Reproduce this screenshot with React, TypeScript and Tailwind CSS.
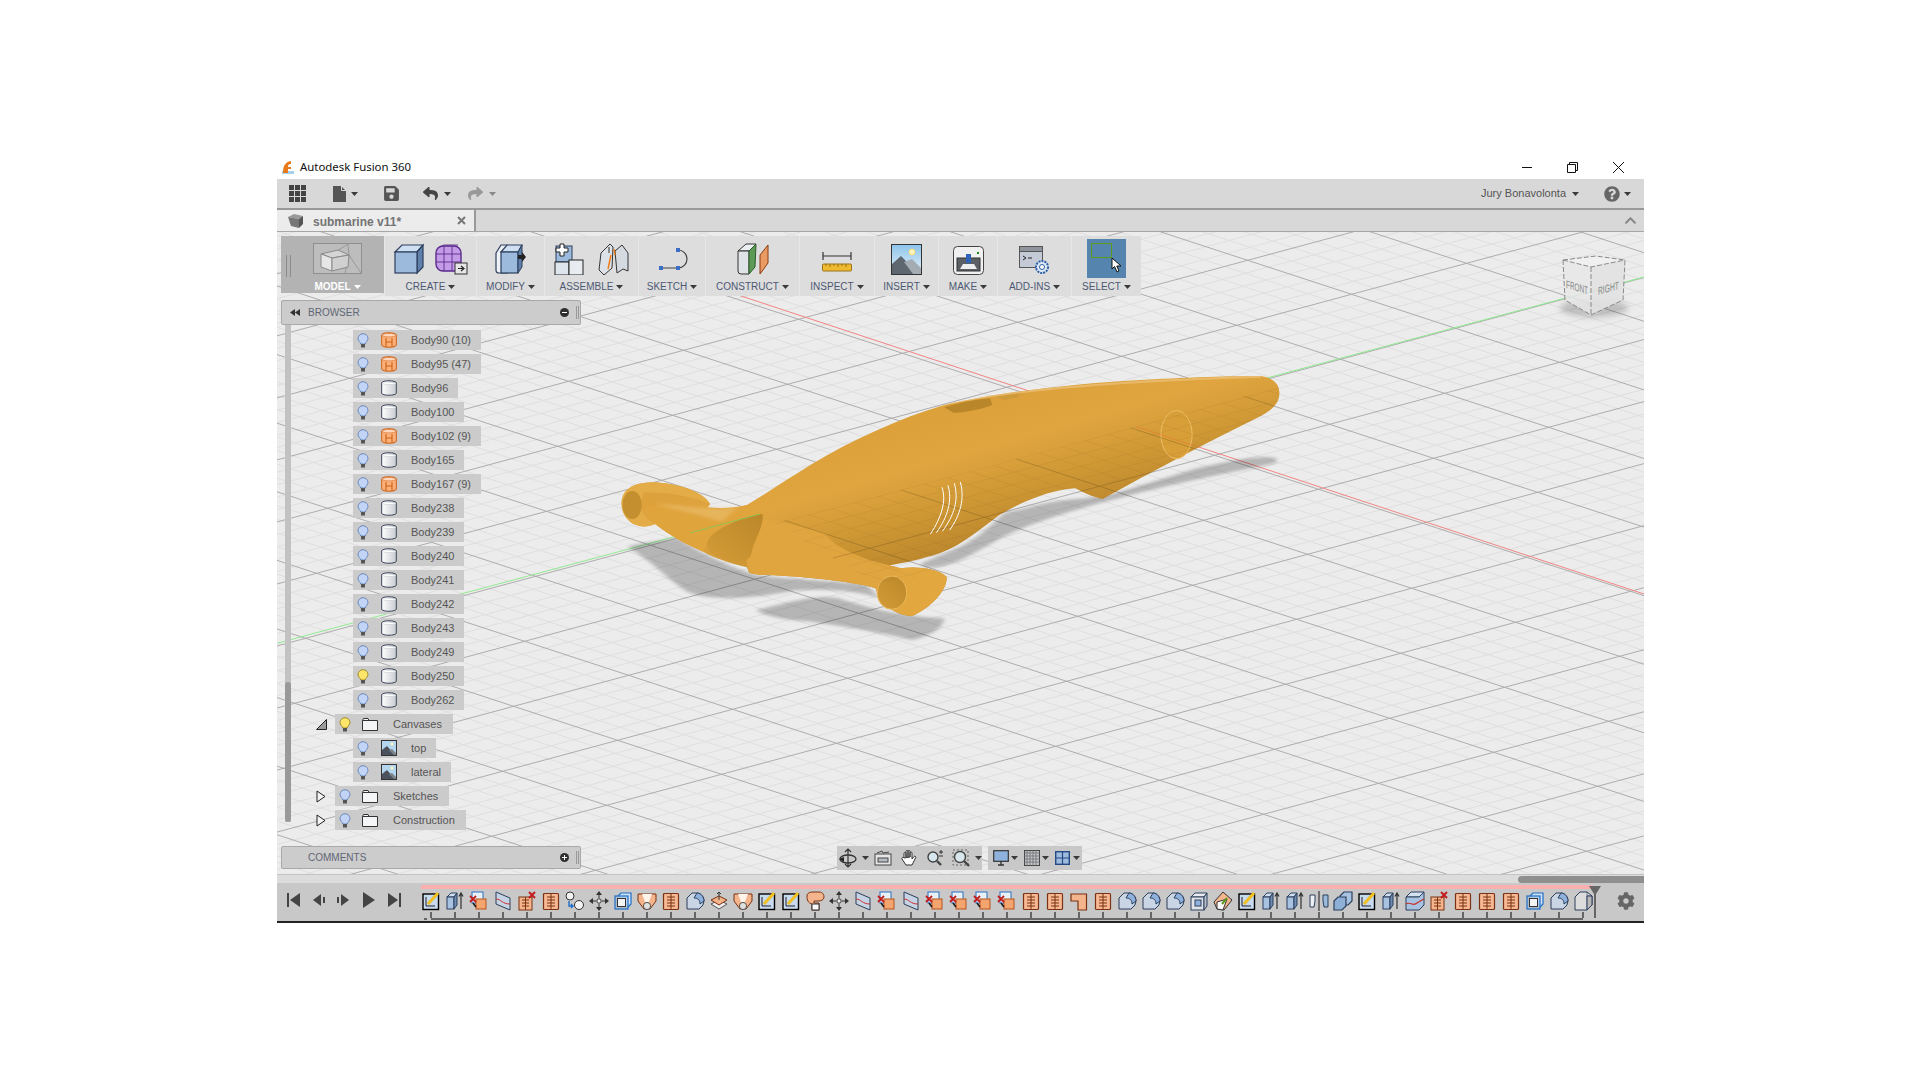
import type { ReactNode } from "react";
import { FaChevronUp, FaCog, FaQuestionCircle, FaReply, FaSave, FaShare } from "react-icons/fa";

/* VIEWPORT GRID: ground plane is almost affine, so a plain lattice is enough */
const O = [1110.6, 421.3];
const G = [-115, 31];
const R = [104, 34];

function lattice(major: boolean) {
  let d = "";
  for (let n = -80; n <= 80; n++) {
    if ((n % 5 === 0) !== major) continue;
    const i = n / 5;
    const ax = O[0] + i * G[0] - 18 * R[0];
    const ay = O[1] + i * G[1] - 18 * R[1];
    const bx = O[0] + i * G[0] + 18 * R[0];
    const by = O[1] + i * G[1] + 18 * R[1];
    d += `M${ax} ${ay}L${bx} ${by}`;
    const cx = O[0] + i * R[0] - 18 * G[0];
    const cy = O[1] + i * R[1] - 18 * G[1];
    const ex = O[0] + i * R[0] + 18 * G[0];
    const ey = O[1] + i * R[1] + 18 * G[1];
    d += `M${cx} ${cy}L${ex} ${ey}`;
  }
  return d;
}

const MAJOR = lattice(true);
const MINOR = lattice(false);

const BODY =
  "M47 460C48 420 70 398 115 397C170 400 225 425 240 462L235 472C265 476 295 474 320 465C400 400 480 315 600 243C650 212 700 185 750 165C860 130 1000 105 1150 92C1250 84 1360 78 1440 78C1470 85 1482 105 1480 135C1478 165 1460 185 1430 205C1320 280 1210 360 1095 447C1070 440 1050 425 1035 415C980 420 920 455 870 495C830 535 790 585 740 610C700 628 660 640 630 646L655 655C690 648 735 655 755 680C758 715 725 770 680 798C655 800 625 775 610 745L600 715C570 700 470 682 380 676C360 675 340 675 325 668L320 652C285 640 250 625 225 605C190 585 150 555 120 522C105 532 85 532 70 520C55 505 47 485 47 460Z";

function Submarine() {
  return (
    <g transform="translate(600 350) scale(0.459 0.3333)">
      <g fill="#000" fillOpacity="0.23" filter="url(#soft)">
        <path d="M1475 325C1440 315 1380 330 1300 355L1110 435C1080 445 1000 445 940 470L880 490C850 530 820 570 770 600L700 640C700 665 760 650 800 620L860 575C900 540 1000 490 1130 445C1250 400 1400 360 1470 340Z" />
        <path d="M60 590C90 578 150 570 170 565C220 610 280 650 340 675C420 690 500 690 580 705L610 745C560 720 480 715 420 722C340 745 240 755 190 725C150 690 110 630 60 590Z" />
        <path d="M340 780C380 770 460 730 520 745C600 780 660 800 750 805C750 830 720 860 680 870C620 850 540 830 460 815C410 810 360 800 340 780Z" />
      </g>
      <path d={BODY} fill="url(#hull)" />
      {/* lit wing and nacelles */}
      <path d="M320 500C380 510 440 530 490 550C505 585 560 625 630 646L655 655L600 715C570 700 470 682 380 676C360 675 340 675 325 668L320 640C320 600 320 540 320 500Z" fill="#e1a53f" />
      <path d="M120 522C110 500 100 490 95 480C110 460 140 462 170 470C220 482 280 480 320 465L355 495L240 560L225 605C190 585 150 555 120 522Z" fill="#e0a43d" />
      <path d="M120 462C170 462 230 482 300 472L265 515C220 495 170 480 120 462Z" fill="#eec477" fillOpacity="0.5" filter="url(#soft2)" />
      <path d="M355 493C340 490 270 520 240 560C225 590 235 610 270 630C300 640 325 640 330 610C335 570 355 540 355 493Z" fill="url(#intake)" />
      <path d="M47 460C48 420 70 398 115 397C170 400 225 425 240 462C200 440 150 425 95 428C85 470 90 500 120 522C105 532 85 532 70 520C55 505 47 485 47 460Z" fill="#e4ac46" />
      <ellipse cx="70" cy="465" rx="21" ry="42" fill="#c48f2f" />
      <path d="M600 715L655 655C690 648 735 655 755 680C758 715 725 770 680 798C655 800 625 775 610 745Z" fill="#e2a83f" />
      <ellipse cx="636" cy="728" rx="32" ry="50" fill="url(#intake)" stroke="#eab75a" vectorEffect="non-scaling-stroke" />
      <ellipse cx="1256" cy="254" rx="34" ry="72" fill="#d89e37" stroke="#edbe66" vectorEffect="non-scaling-stroke" />
      <path d="M750 172C780 160 810 150 850 145L855 165C830 178 790 190 770 188Z" fill="#b98629" />
      <path d="M862 140L915 128L912 142L880 150Z" fill="#cf9a3a" />
      <g clipPath="url(#hullLocal)">
        <path d="M300 470C440 340 560 230 760 160C900 120 1150 92 1440 80" fill="none" stroke="#f0c888" strokeWidth="2" strokeOpacity="0.6" vectorEffect="non-scaling-stroke" />
        <g clipPath="url(#shadeZone)" opacity="0.16">
          <g transform="scale(2.1786 3) translate(-600 -350)">
            <path d={MAJOR} stroke="#000" strokeWidth="1" fill="none" vectorEffect="non-scaling-stroke" />
            <path d={MINOR} stroke="#000" strokeWidth="1" strokeOpacity="0.25" fill="none" vectorEffect="non-scaling-stroke" />
            <line x1="1136" y1="426.5" x2="1240" y2="461" stroke="#ff2020" strokeWidth="1" vectorEffect="non-scaling-stroke" />
          </g>
        </g>
      </g>
      <g fill="none" stroke="#fff" strokeWidth="1" vectorEffect="non-scaling-stroke">
        <path d="M745 412C755 450 745 500 720 552" vectorEffect="non-scaling-stroke" />
        <path d="M758 406C768 450 758 500 733 548" vectorEffect="non-scaling-stroke" />
        <path d="M772 400C782 450 772 495 746 544" vectorEffect="non-scaling-stroke" />
        <path d="M785 396C795 445 785 495 762 540" vectorEffect="non-scaling-stroke" />
      </g>
    </g>
  );
}

function NavCube() {
  return (
    <g>
      <ellipse cx="1594" cy="308" rx="34" ry="9" fill="#000" fillOpacity="0.2" filter="url(#soft3)" />
      <polygon points="1563,260 1591,267 1625,260 1596,256" fill="#f2f2f2" fillOpacity="0.7" />
      <polygon points="1563,260 1591,267 1591,315 1565,300" fill="#e8e8e8" fillOpacity="0.85" />
      <polygon points="1591,267 1625,260 1623,300 1591,315" fill="#e2e2e2" fillOpacity="0.9" />
      <path d="M1563 260L1591 267L1625 260M1563 260L1565 300L1591 315L1623 300L1625 260M1591 267V315M1563 260L1596 256L1625 260" fill="none" stroke="#8a8a8a" strokeDasharray="5 2" />
      <text x="0" y="0" transform="translate(1566 288) skewY(16)" fontFamily="Liberation Sans" fontSize="11" textLength="22" lengthAdjust="spacingAndGlyphs" fill="#858585">FRONT</text>
      <text x="0" y="0" transform="translate(1598 295) skewY(-16)" fontFamily="Liberation Sans" fontSize="11" textLength="21" lengthAdjust="spacingAndGlyphs" fill="#858585">RIGHT</text>
    </g>
  );
}

function Viewport() {
  return (
    <svg className="absolute inset-0 h-full w-full" viewBox="277 232 1367 642">
      <defs>
        <filter id="soft" x="-20%" y="-20%" width="140%" height="140%">
          <feGaussianBlur stdDeviation="5" />
        </filter>
        <filter id="soft2" x="-20%" y="-20%" width="140%" height="140%">
          <feGaussianBlur stdDeviation="5" />
        </filter>
        <filter id="soft3" x="-20%" y="-50%" width="140%" height="200%">
          <feGaussianBlur stdDeviation="3" />
        </filter>
        <linearGradient id="hull" gradientUnits="userSpaceOnUse" x1="800" y1="130" x2="1000" y2="640">
          <stop offset="0" stopColor="#dba03a" />
          <stop offset="0.3" stopColor="#e0a53f" />
          <stop offset="0.55" stopColor="#cf9835" />
          <stop offset="0.85" stopColor="#b7832a" />
          <stop offset="1" stopColor="#b07e28" />
        </linearGradient>
        <linearGradient id="intake" gradientUnits="objectBoundingBox" x1="0" y1="1" x2="1" y2="0">
          <stop offset="0" stopColor="#d49c38" />
          <stop offset="1" stopColor="#bb8729" />
        </linearGradient>
        <clipPath id="hullLocal">
          <path d={BODY} />
        </clipPath>
        <clipPath id="shadeZone">
          <path d="M380 520L900 330L1480 110V500L600 700Z" />
        </clipPath>
      </defs>
      <rect x="277" y="232" width="1367" height="642" fill="#ececec" />
      <path d={MINOR} stroke="#dfdfdf" strokeWidth="1" fill="none" />
      <path d={MAJOR} stroke="#adadad" strokeWidth="1" fill="none" />
      <line x1="735" y1="294" x2="1644" y2="594" stroke="#f28484" />
      <line x1="278" y1="643" x2="1644" y2="277" stroke="#90ea90" />
      <Submarine />
      <line x1="690" y1="533" x2="760" y2="514" stroke="#7fc85a" strokeOpacity="0.8" />
      <NavCube />
    </svg>
  );
}

function Caret({ color = "#3a3a3a" }: { color?: string }) {
  return (
    <svg width="7" height="4" viewBox="0 0 7 4" className="shrink-0">
      <polygon points="0,0 7,0 3.5,4" fill={color} />
    </svg>
  );
}

/* TOOLBAR ICONS */
const BoxIcon = () => (
  <svg width="32" height="32" viewBox="0 0 32 32">
    <polygon points="2,9 9,2 30,2 24,9" fill="#cfe0f2" stroke="#2c3e5c" strokeWidth="1.2" />
    <polygon points="24,9 30,2 30,24 24,30" fill="#5f80ab" stroke="#2c3e5c" strokeWidth="1.2" />
    <rect x="2" y="9" width="22" height="21" fill="#9bbadc" stroke="#2c3e5c" strokeWidth="1.2" />
  </svg>
);
const FormIcon = () => (
  <svg width="34" height="32" viewBox="0 0 34 32">
    <rect x="2" y="3" width="25" height="25" rx="7" fill="#c39be6" stroke="#5a2a8c" strokeWidth="1.4" />
    <path d="M2 11H27M2 19H27M10 3V28M18 3V28M6 4L10 2H24" stroke="#5a2a8c" strokeWidth="0.9" fill="none" />
    <rect x="21" y="20" width="12" height="11" fill="#e6e6e6" stroke="#333" />
    <path d="M24 25.5H29M27 23L30 25.5L27 28" stroke="#222" strokeWidth="1.2" fill="none" />
  </svg>
);
const ModifyIcon = () => (
  <svg width="32" height="32" viewBox="0 0 32 32">
    <path d="M1 10L6 2H12V30H4Q1 30 1 27Z" fill="#eef1f5" stroke="#2c3e5c" strokeWidth="1.2" />
    <polygon points="6,9 12,2 27,2 23,9" fill="#cfe0f2" stroke="#2c3e5c" strokeWidth="1.2" />
    <rect x="6" y="9" width="17" height="21" fill="#9bbadc" stroke="#2c3e5c" strokeWidth="1.2" />
    <polygon points="23,9 27,2 27,24 23,30" fill="#5f80ab" stroke="#2c3e5c" />
    <path d="M23 12H27V9L31 14L27 19V16H23Z" fill="#222" />
  </svg>
);
const AssembleIcon = () => (
  <svg width="32" height="32" viewBox="0 0 32 32">
    <rect x="2" y="3" width="16" height="16" fill="#9bbadc" stroke="#2c3e5c" />
    <rect x="1" y="19" width="14" height="13" fill="#dfe5ec" stroke="#222" />
    <rect x="15" y="17" width="14" height="15" fill="#e8ecf1" stroke="#222" />
    <path d="M6 1H10V5H14V9H10V13H6V9H2V5H6Z" fill="#fff" stroke="#222" />
  </svg>
);
const JointIcon = () => (
  <svg width="32" height="32" viewBox="0 0 32 32">
    <path d="M1 27L3 10L12 1L15 4L14 25L6 32Z" fill="#dde2e8" stroke="#333" />
    <path d="M17 8L24 2L30 10L30 28L25 26L19 30Z" fill="#d4dae1" stroke="#333" />
    <path d="M11 4L11 10" stroke="#333" />
    <path d="M10 26L13 12" stroke="#f07a10" strokeWidth="1.4" />
    <path d="M17 12L16 6" stroke="#f07a10" strokeWidth="1.4" />
  </svg>
);
const SketchIcon = () => (
  <svg width="32" height="24" viewBox="0 0 32 24">
    <path d="M3 20H19A9 9 0 0 0 19 2" fill="none" stroke="#444" strokeWidth="1.2" />
    <rect x="0" y="18" width="4" height="4" fill="#3a6fc4" />
    <rect x="17" y="18" width="4" height="4" fill="#3a6fc4" />
    <rect x="17" y="0" width="4" height="4" fill="#3a6fc4" />
  </svg>
);
const ConstructIcon = () => (
  <svg width="32" height="32" viewBox="0 0 32 32">
    <polygon points="1,8 9,1 19,1 12,8" fill="#eceff2" stroke="#333" />
    <path d="M1 8H12V31H4Q1 31 1 28Z" fill="#dfe2e6" stroke="#333" />
    <polygon points="12,8 19,1 18,24 12,31" fill="#5c9a55" stroke="#2c5a2c" />
    <polygon points="23,12 31,2 31,20 23,31" fill="#ea9b63" stroke="#8a3a12" />
  </svg>
);
const InspectIcon = () => (
  <svg width="30" height="24" viewBox="0 0 30 24">
    <path d="M1 6H29M1 2V10M29 2V10" stroke="#333" strokeWidth="1.2" fill="none" />
    <rect x="0.5" y="14" width="29" height="7" rx="1" fill="#efb931" stroke="#9a7418" />
    <path d="M4 14V16M8 14V17M12 14V16M16 14V17M20 14V16M24 14V17" stroke="#9a7418" />
  </svg>
);
const InsertIcon = () => (
  <svg width="31" height="31" viewBox="0 0 31 31">
    <defs>
      <linearGradient id="sky" x1="0" y1="0" x2="0" y2="1">
        <stop offset="0" stopColor="#8cc4ec" />
        <stop offset="1" stopColor="#e8f2f8" />
      </linearGradient>
    </defs>
    <rect x="0.5" y="0.5" width="30" height="30" fill="url(#sky)" stroke="#333" />
    <circle cx="21" cy="8" r="3" fill="#fff4c0" stroke="#f1d97a" />
    <polygon points="1,30 1,20 10,12 19,21 30,30" fill="#5e6670" />
    <polygon points="13,18 21,15 30,24 30,30 22,30" fill="#a3abb3" />
  </svg>
);
const MakeIcon = () => (
  <svg width="31" height="29" viewBox="0 0 31 29">
    <rect x="0.5" y="0.5" width="30" height="28" rx="4" fill="#f0f0f0" stroke="#444" />
    <rect x="4" y="12" width="23" height="13" fill="#5b5f66" stroke="#333" />
    <rect x="13" y="8" width="5" height="9" fill="#2e63b8" />
    <polygon points="7,23 10,18 21,18 24,23" fill="#eee" />
    <rect x="24" y="6" width="2" height="2" fill="#1a8a1a" />
  </svg>
);
const AddInsIcon = () => (
  <svg width="31" height="29" viewBox="0 0 31 29">
    <rect x="0.5" y="0.5" width="23" height="21" fill="#c4cad6" stroke="#555" />
    <rect x="0.5" y="0.5" width="23" height="5" fill="#8f949c" stroke="#555" />
    <path d="M4 10L7 12L4 14M9 12H13" stroke="#222" fill="none" />
    <circle cx="23" cy="21" r="6" fill="#dfe9f6" stroke="#2b5fa8" strokeWidth="2" strokeDasharray="2 1" />
    <circle cx="23" cy="21" r="2.5" fill="#fff" stroke="#2b5fa8" />
  </svg>
);
const SelectIcon = () => (
  <div className="relative flex h-[39px] w-[39px] items-start justify-start bg-[#5585ae] pl-[4px] pt-[4px]">
    <div className="h-[15px] w-[21px] border border-[#5c9a1a]" />
    {/* cursor sits on top of the marquee */}
    <svg className="absolute left-[24px] top-[18px]" width="11" height="16" viewBox="0 0 11 16">
      <path d="M1 1V12L3.5 9.5L6 15L8 14L5.8 9H10Z" fill="#fff" stroke="#111" />
    </svg>
  </div>
);
const ModelCube = () => (
  <svg width="50" height="32" viewBox="0 0 50 32">
    <rect x="0.5" y="0.5" width="48" height="30" fill="#bdbdbd" stroke="#8f8f8f" />
    <path d="M35 1L36 12L48 30M35 1L24 8M36 12L32 30" stroke="#999" fill="none" />
    <polygon points="8,11 25,7 36,12 19,15" fill="#d5d5d5" stroke="#8a8a8a" />
    <polygon points="8,11 19,15 19,28 8,24" fill="#e6e6e6" stroke="#8a8a8a" />
    <polygon points="19,15 36,12 35,24 19,28" fill="#d0d0d0" stroke="#8a8a8a" />
  </svg>
);

function Section({ width, label, active, children }: { width: string; label: string; active?: boolean; children: ReactNode }) {
  return (
    <div className={`flex flex-col items-center ${width} ${active ? "bg-[#b3b3b3]" : "border-l border-[#e6e6e6] bg-[#dddddd]"}`}>
      <div className="flex h-[42px] items-end justify-center gap-[9px]">{children}</div>
      <div className={`mt-[3px] flex items-center gap-[3px] text-[10px] leading-[12px] ${active ? "ml-[10px] font-bold text-white" : "text-[#4d5873]"}`}>
        {label}
        <Caret color={active ? "#ffffff" : "#3a3a3a"} />
      </div>
    </div>
  );
}

function Toolbar() {
  return (
    <div className="ml-[4px] mt-[4px] flex h-[60px] w-fit">
      <div className="relative">
        <Section width="w-[103px]" label="MODEL" active>
          <div className="mb-[3px] ml-[10px]">
            <ModelCube />
          </div>
        </Section>
        {/* grip over the model tab */}
        <div className="absolute left-[5px] top-[19px] h-[22px] w-[5px] border-x border-[#8c8c8c]" />
      </div>
      <Section width="w-[92px]" label="CREATE">
        <div className="mb-[3px] flex gap-[9px]">
          <BoxIcon />
          <FormIcon />
        </div>
      </Section>
      <Section width="w-[68px]" label="MODIFY">
        <div className="mb-[3px]">
          <ModifyIcon />
        </div>
      </Section>
      <Section width="w-[94px]" label="ASSEMBLE">
        <div className="mb-[3px] flex gap-[12px]">
          <AssembleIcon />
          <JointIcon />
        </div>
      </Section>
      <Section width="w-[67px]" label="SKETCH">
        <div className="mb-[6px] ml-[6px]">
          <SketchIcon />
        </div>
      </Section>
      <Section width="w-[94px]" label="CONSTRUCT">
        <div className="mb-[3px]">
          <ConstructIcon />
        </div>
      </Section>
      <Section width="w-[75px]" label="INSPECT">
        <div className="mb-[4px]">
          <InspectIcon />
        </div>
      </Section>
      <Section width="w-[64px]" label="INSERT">
        <div className="mb-[3px]">
          <InsertIcon />
        </div>
      </Section>
      <Section width="w-[59px]" label="MAKE">
        <div className="mb-[3px]">
          <MakeIcon />
        </div>
      </Section>
      <Section width="w-[74px]" label="ADD-INS">
        <div className="mb-[3px]">
          <AddInsIcon />
        </div>
      </Section>
      <Section width="w-[70px]" label="SELECT">
        <SelectIcon />
      </Section>
    </div>
  );
}

/* BROWSER TREE */
const Bulb = ({ on }: { on?: boolean }) => (
  <svg width="12" height="15" viewBox="0 0 12 15" className="shrink-0">
    <path d="M6 0.7A5 5 0 0 1 11 5.5C11 8 8.6 8.8 8.2 11H3.8C3.4 8.8 1 8 1 5.5A5 5 0 0 1 6 0.7Z" fill={on ? "#ffe66b" : "#c2d4f6"} stroke={on ? "#a08c22" : "#6b88bd"} />
    <rect x="4" y="11" width="4" height="3.5" fill="#555" />
  </svg>
);
const BodyGlyph = () => (
  <svg width="16" height="16" viewBox="0 0 16 16" className="shrink-0">
    <defs>
      <linearGradient id="cyl" x1="0" y1="0" x2="1" y2="0">
        <stop offset="0" stopColor="#fff" />
        <stop offset="1" stopColor="#c8ccd2" />
      </linearGradient>
    </defs>
    <path d="M0.7 3C0.7 0 15.3 0 15.3 3V13C15.3 16 0.7 16 0.7 13Z" fill="url(#cyl)" stroke="#3c4658" />
    <path d="M1 3C1 5 15 5 15 3" fill="#fff" stroke="#c4c8d0" strokeWidth="0.6" />
  </svg>
);
const ComponentGlyph = () => (
  <svg width="16" height="16" viewBox="0 0 16 16" className="shrink-0">
    <path d="M0.7 3C0.7 0 15.3 0 15.3 3V13C15.3 16 0.7 16 0.7 13Z" fill="#fbb07a" stroke="#cf5f12" />
    <path d="M5 6V15M11 6V15M5 10H11" stroke="#cf5f12" strokeWidth="1.1" fill="none" />
    <path d="M1 3C1 5.5 15 5.5 15 3C15 1 1 1 1 3Z" fill="#fdd9bf" stroke="#cf5f12" strokeWidth="0.5" />
  </svg>
);
const CanvasGlyph = () => (
  <svg width="16" height="16" viewBox="0 0 16 16" className="shrink-0">
    <rect x="0.5" y="0.5" width="15" height="15" fill="#b4d6ee" stroke="#333" />
    <polygon points="1,15 1,10 6,6 14,15" fill="#4b525c" />
    <polygon points="8,10 11,9 15,13 15,15 13,15" fill="#7b838c" />
    <circle cx="11" cy="4" r="1.5" fill="#fff6c0" />
  </svg>
);
const FolderGlyph = () => (
  <svg width="16" height="13" viewBox="0 0 16 13" className="shrink-0">
    <path d="M0.5 2.5L1.5 0.5H6L7 2.5H15.5V12.5H0.5Z" fill="#f4f5f7" stroke="#333" />
    <path d="M0.5 2.5H7" stroke="#333" />
  </svg>
);

const BODIES: [string, boolean, boolean][] = [
  ["Body90 (10)", true, false],
  ["Body95 (47)", true, false],
  ["Body96", false, false],
  ["Body100", false, false],
  ["Body102 (9)", true, false],
  ["Body165", false, false],
  ["Body167 (9)", true, false],
  ["Body238", false, false],
  ["Body239", false, false],
  ["Body240", false, false],
  ["Body241", false, false],
  ["Body242", false, false],
  ["Body243", false, false],
  ["Body249", false, false],
  ["Body250", false, true],
  ["Body262", false, false],
];

function Row({ on, icon, label }: { on?: boolean; icon: ReactNode; label: string }) {
  return (
    <div className="flex h-5 w-fit items-center bg-[#cbcbcb] pr-[10px] text-[11px] text-[#555555]">
      <div className="flex w-[20px] justify-center">
        <Bulb on={on} />
      </div>
      <div className="ml-[8px] flex w-[16px] justify-center">{icon}</div>
      <span className="ml-[14px] leading-none">{label}</span>
    </div>
  );
}

function FolderRow({ open, on, label }: { open?: boolean; on?: boolean; label: string }) {
  return (
    <div className="ml-[24px] flex h-5 items-center">
      <div className="flex w-[20px] justify-start pl-[1px]">
        {open ? (
          <svg width="11" height="11" viewBox="0 0 11 11">
            <polygon points="10.5,0.5 10.5,10.5 0.5,10.5" fill="#9a9a9a" stroke="#222" />
          </svg>
        ) : (
          <svg width="10" height="13" viewBox="0 0 10 13">
            <polygon points="1,1 9,6.5 1,12" fill="#f4f4f4" stroke="#222" />
          </svg>
        )}
      </div>
      <div className="flex h-5 w-fit items-center bg-[#cbcbcb] pr-[11px] text-[11px] text-[#555555]">
        <div className="flex w-[20px] justify-center">
          <Bulb on={on} />
        </div>
        <div className="ml-[7px] flex w-[16px] justify-center">
          <FolderGlyph />
        </div>
        <span className="ml-[15px] leading-none">{label}</span>
      </div>
    </div>
  );
}

function Tree() {
  return (
    <div className="flex h-[497px]">
      <div className="ml-[8px] flex w-[6px] flex-col bg-[#c2c2c2]">
        <div className="flex-1" />
        <div className="h-[140px] rounded-[3px] bg-[#999999]" />
      </div>
      <div className="flex flex-col gap-1 pt-[5px]">
        {BODIES.map(([name, comp, on]) => (
          <div key={name} className="ml-[62px]">
            <Row on={on} icon={comp ? <ComponentGlyph /> : <BodyGlyph />} label={name} />
          </div>
        ))}
        <FolderRow open on label="Canvases" />
        <div className="ml-[62px]">
          <Row icon={<CanvasGlyph />} label="top" />
        </div>
        <div className="ml-[62px]">
          <Row icon={<CanvasGlyph />} label="lateral" />
        </div>
        <FolderRow label="Sketches" />
        <FolderRow label="Construction" />
      </div>
    </div>
  );
}

function PanelHeader({ title, plus, height }: { title: string; plus?: boolean; height: string }) {
  return (
    <div className={`ml-[4px] flex w-[300px] items-center rounded-[2px] border border-[#a9a9a9] bg-[#cccccc] text-[10px] text-[#5f6674] ${height}`}>
      <div className="flex w-[26px] justify-center">
        {!plus && (
          <svg width="10" height="7" viewBox="0 0 10 7">
            <polygon points="5,0 5,7 0,3.5" fill="#333" />
            <polygon points="10,0 10,7 5,3.5" fill="#333" />
          </svg>
        )}
      </div>
      <span>{title}</span>
      <div className="ml-auto flex h-[9px] w-[9px] items-center justify-center rounded-full bg-[#2f2f2f]">
        <div className="relative h-[1.5px] w-[5px] bg-white">
          {plus && <div className="absolute left-[1.75px] top-[-1.75px] h-[5px] w-[1.5px] bg-white" />}
        </div>
      </div>
      <div className="ml-[7px] mr-[1px] h-[13px] w-[3px] border-x border-[#999999]" />
    </div>
  );
}

/* BOTTOM NAV BAR */
function NavBar() {
  return (
    <div className="absolute left-[560px] top-[614px] flex gap-[6px]">
      <div className="flex h-[24px] w-[145px] items-center bg-[#c8c8c8] pl-[1px]">
        <svg width="20" height="20" viewBox="0 0 20 20" className="ml-[0px]">
          <path d="M10 1V19M7 4L10 1L13 4M7 16L10 19L13 16" stroke="#333" strokeWidth="1.2" fill="none" />
          <ellipse cx="10" cy="11" rx="8" ry="4" stroke="#333" strokeWidth="1.3" fill="none" />
          <polygon points="1,11 6,9 6,14" fill="#222" />
        </svg>
        <div className="ml-[4px]">
          <Caret />
        </div>
        <svg width="18" height="16" viewBox="0 0 18 16" className="ml-[5px]">
          <rect x="1" y="4" width="16" height="11" fill="#e6e6e6" stroke="#444" />
          <rect x="4" y="8" width="10" height="4" fill="#b8bcc2" stroke="#444" />
          <path d="M3 3L8 1L9 3L15 2" stroke="#444" fill="none" />
        </svg>
        <svg width="17" height="18" viewBox="0 0 17 18" className="ml-[8px]">
          <path d="M4 9V4.5A1 1 0 0 1 6 4.5V8M6 8V2.5A1 1 0 0 1 8 2.5V8M8 8V2.5A1 1 0 0 1 10 2.5V8M10 8V4A1 1 0 0 1 12 4V10L14 7.5A1 1 0 0 1 15.5 9L12 16H6L2 10A1 1 0 0 1 4 9Z" fill="#fff" stroke="#333" />
        </svg>
        <svg width="18" height="18" viewBox="0 0 18 18" className="ml-[9px]">
          <circle cx="7" cy="8" r="5" fill="#d8e6ee" stroke="#444" strokeWidth="1.4" />
          <path d="M11 12L15 16" stroke="#444" strokeWidth="2.4" />
          <path d="M13 3H17M15 1V5M13 7H17" stroke="#333" />
        </svg>
        <svg width="18" height="18" viewBox="0 0 18 18" className="ml-[8px]">
          <rect x="1" y="1" width="15" height="15" fill="none" stroke="#666" strokeDasharray="2 2" />
          <circle cx="8" cy="8" r="5.5" fill="#d8e6ee" stroke="#444" strokeWidth="1.4" />
          <path d="M12 12L17 17" stroke="#444" strokeWidth="2.4" />
        </svg>
        <div className="ml-[5px]">
          <Caret />
        </div>
      </div>
      <div className="flex h-[24px] w-[94px] items-center bg-[#c8c8c8] pl-[4px]">
        <svg width="16" height="16" viewBox="0 0 16 16" className="ml-[1px]">
          <rect x="0.7" y="0.7" width="14.6" height="10.6" fill="#8fb2dc" stroke="#333" strokeWidth="1.2" />
          <path d="M5 15H11M8 11V15" stroke="#333" strokeWidth="1.4" />
        </svg>
        <div className="ml-[2px]">
          <Caret />
        </div>
        <svg width="16" height="16" viewBox="0 0 16 16" className="ml-[6px]">
          <rect x="0.5" y="0.5" width="15" height="15" fill="#c0c4ca" stroke="#444" />
          <path d="M3 0V16M6 0V16M9 0V16M12 0V16M0 3H16M0 6H16M0 9H16M0 12H16" stroke="#666" strokeWidth="0.7" />
        </svg>
        <div className="ml-[2px]">
          <Caret />
        </div>
        <svg width="15" height="14" viewBox="0 0 15 14" className="ml-[6px]">
          <rect x="0.7" y="0.7" width="13.6" height="12.6" fill="#9ebadc" stroke="#234a84" strokeWidth="1.4" />
          <path d="M7.5 0V14M0 7H15" stroke="#234a84" strokeWidth="1.2" />
        </svg>
        <div className="ml-[3px]">
          <Caret />
        </div>
      </div>
    </div>
  );
}

/* TIMELINE ICONS */
const W = { width: 20, height: 20, viewBox: "0 0 20 20" };
const Navy = "#2c3e5c";
const Brown = "#7a3212";

const TL: Record<string, ReactNode> = {
  sketch: (
    <svg {...W}>
      <rect x="2" y="3" width="15.5" height="15.5" fill="#c7daef" stroke="#000" strokeWidth="1.4" />
      <path d="M5 6V15H14" stroke="#222" fill="none" />
      <path d="M7 13L17 2" stroke="#f0c020" strokeWidth="3" />
    </svg>
  ),
  extrude: (
    <svg {...W}>
      <polygon points="2,6 6,2 12,2 9,6" fill="#cfe0f2" stroke={Navy} />
      <rect x="2" y="6" width="7" height="12" fill="#a8c3e2" stroke={Navy} />
      <polygon points="9,6 12,2 12,14 9,18" fill="#6d8db6" stroke={Navy} />
      <path d="M16 18V3M14 5.5L16 2L18 5.5" stroke="#333" strokeWidth="1.2" fill="none" />
    </svg>
  ),
  combine: (
    <svg {...W}>
      <rect x="3" y="1" width="11" height="11" fill="#e8f0f8" stroke="#2f6fc0" />
      <rect x="7" y="8" width="10" height="10" fill="#f3a46f" stroke="#b9521a" />
      <path d="M1 5L7 11M7 5L1 11" stroke="#c21c1c" strokeWidth="1.8" />
      <path d="M4 12L7 16" stroke="#111" strokeWidth="1.4" />
    </svg>
  ),
  patch: (
    <svg {...W}>
      <polygon points="3,1 17,7 17,19 3,13" fill="#c5d3e4" stroke={Navy} />
      <path d="M3 8C8 8 9 13 17 13" stroke="#c9302c" fill="none" />
    </svg>
  ),
  del: (
    <svg {...W}>
      <rect x="2" y="6" width="13" height="13" fill="#f4b48c" stroke={Brown} />
      <path d="M8.5 6V19M5 9H12M5 12H12M5 15H12" stroke={Brown} />
      <path d="M12 1L18 7M18 1L12 7" stroke="#c21c1c" strokeWidth="2" />
    </svg>
  ),
  book: (
    <svg {...W}>
      <rect x="2.5" y="2.5" width="15" height="16" rx="1" fill="#f6b892" stroke={Brown} strokeWidth="1.2" />
      <path d="M10 2V19M6 6H14M6 9H14M6 12H14M6 15H14" stroke={Brown} />
    </svg>
  ),
  joint: (
    <svg {...W}>
      <rect x="1" y="1" width="8" height="8" rx="4" fill="#f2f2f2" stroke="#333" />
      <circle cx="14" cy="14" r="4.5" fill="#f2f2f2" stroke="#333" />
      <path d="M4 10V15H8M6 13L8 15L6 17" stroke="#1e6fc8" strokeWidth="1.4" fill="none" />
    </svg>
  ),
  move: (
    <svg {...W}>
      <circle cx="10" cy="10" r="2.2" fill="#eee" stroke="#333" />
      <path d="M10 0L13 4H7ZM10 20L13 16H7ZM0 10L4 7V13ZM20 10L16 7V13Z" fill="#333" />
      <path d="M10 4V7M10 13V16M4 10H7M13 10H16" stroke="#333" />
    </svg>
  ),
  shell: (
    <svg {...W}>
      <path d="M5 5L8 2H18V13L15 16" fill="#cfe0f2" stroke="#1e6fc8" strokeWidth="1.2" />
      <rect x="2" y="5" width="13" height="13" fill="#1e6fc8" fillOpacity="0.15" stroke="#1e6fc8" strokeWidth="1.2" />
      <rect x="4.5" y="7.5" width="8" height="8" fill="#f4f4f4" stroke="#333" />
    </svg>
  ),
  cup: (
    <svg {...W}>
      <path d="M1 3H19V10L13 18H7L1 10Z" fill="#f4b48c" stroke={Brown} />
      <path d="M5 3L8 11H12L15 3Z" fill="#fff3ea" />
      <circle cx="10" cy="15" r="3.6" fill="#e0e0e0" stroke="#555" />
    </svg>
  ),
  round: (
    <svg {...W}>
      <path d="M2 7L7 2H12C16 2 19 6 19 10L18 14L14 18H2Z" fill="#c9d5e4" stroke={Navy} />
      <path d="M12 2C16 2 19 6 19 10L15 13C15 9 13 7 9 7Z" fill="#8fb2dc" stroke={Navy} />
    </svg>
  ),
  layers: (
    <svg {...W}>
      <path d="M2 13L10 9L18 13L10 18Z" fill="#eee" stroke="#555" />
      <path d="M2 9L10 5L18 9L10 14Z" fill="#f3b48a" stroke={Brown} />
      <path d="M10 1V9M8 3L10 1L12 3" stroke="#333" fill="none" />
    </svg>
  ),
  hook: (
    <svg {...W}>
      <path d="M2 5C2 2 5 1 8 1H14C18 1 19 4 19 6C19 9 16 10 13 10H9V12H14V19H7V13C3 12 2 9 2 5Z" fill="#f4b48c" stroke={Brown} />
      <rect x="7" y="13" width="7" height="6" fill="#fafafa" stroke="#333" />
    </svg>
  ),
  corner: (
    <svg {...W}>
      <path d="M2 3H17.5V19H9V10H2Z" fill="#f4b48c" stroke={Brown} strokeWidth="1.2" />
    </svg>
  ),
  box: (
    <svg {...W}>
      <polygon points="2,6 6,2 18,2 15,6" fill="#e8ecf1" stroke={Navy} />
      <rect x="2" y="6" width="13" height="13" fill="#dfe3e8" stroke={Navy} />
      <polygon points="15,6 18,2 18,15 15,19" fill="#b8c0cc" stroke={Navy} />
      <rect x="6" y="9" width="6" height="6" fill="#8fb2dc" stroke={Navy} />
    </svg>
  ),
  diamond: (
    <svg {...W}>
      <polygon points="1,11 10,1 19,9 11,19 4,18" fill="#f4b48c" stroke="#333" />
      <polygon points="4,11 14,8 10,19 4,18" fill="#fafafa" stroke="#333" />
      <path d="M9 13L14 7" stroke="#5c9a1a" strokeWidth="2" />
    </svg>
  ),
  mirror: (
    <svg {...W}>
      <path d="M1 4H6V10L5 16H1Z" fill="#eceff3" stroke={Navy} />
      <path d="M10 0V20" stroke="#333" strokeWidth="1.2" />
      <path d="M14 4H19V16H15L14 10Z" fill="#9bbadc" stroke={Navy} />
    </svg>
  ),
  joined: (
    <svg {...W}>
      <path d="M7 5L11 1H19V10L15 14H8Z" fill="#a8c3e2" stroke={Navy} strokeWidth="1.2" />
      <path d="M1 10L5 6H13V15L9 19H1Z" fill="#8fb0d6" stroke={Navy} strokeWidth="1.2" />
    </svg>
  ),
  boxcurve: (
    <svg {...W}>
      <polygon points="1,6 6,1 19,1 14,6" fill="#d4e2f0" stroke={Navy} />
      <path d="M1 6H14L19 1V14L14 19H1Z" fill="#a8c3e2" stroke={Navy} />
      <path d="M1 13C5 10 8 16 12 12C15 10 17 9 19 8" stroke="#c9302c" strokeWidth="1.2" fill="none" />
    </svg>
  ),
  chamfer: (
    <svg {...W}>
      <path d="M2 6L7 1H14L19 5V14L14 19H2Z" fill="#dcdcdc" stroke={Navy} />
      <path d="M14 1L14 19M14 5H19" stroke={Navy} strokeWidth="0.6" />
      <path d="M14 5L19 5V14L14 19Z" fill="#b8b8b8" stroke={Navy} />
    </svg>
  ),
};

const HISTORY = [
  "sketch", "extrude", "combine", "patch", "del", "book", "joint", "move", "shell", "cup",
  "book", "round", "layers", "cup", "sketch", "sketch", "hook", "move", "patch", "combine",
  "patch", "combine", "combine", "combine", "combine", "book", "book", "corner", "book", "round",
  "round", "round", "box", "diamond", "sketch", "extrude", "extrude", "mirror", "joined", "sketch",
  "extrude", "boxcurve", "del", "book", "book", "book", "shell", "round", "chamfer",
];

function Timeline() {
  return (
    <div className="relative flex h-[38px] bg-[#c8c8c8]">
      <div className="flex h-full w-[142px] items-center pb-[4px] pl-[5px]">
        <svg width="14" height="14" viewBox="0 0 14 14" className="ml-[5px]">
          <path d="M1 0V14" stroke="#444" strokeWidth="2" />
          <polygon points="13,0 13,14 3,7" fill="#444" />
        </svg>
        <svg width="14" height="14" viewBox="0 0 14 14" className="ml-[11px]">
          <polygon points="9,1 9,13 1,7" fill="#444" />
          <rect x="11" y="4" width="2" height="6" fill="#444" />
        </svg>
        <svg width="14" height="14" viewBox="0 0 14 14" className="ml-[10px]">
          <rect x="1" y="4" width="2" height="6" fill="#444" />
          <polygon points="5,1 5,13 13,7" fill="#444" />
        </svg>
        <svg width="14" height="16" viewBox="0 0 14 16" className="ml-[12px]">
          <polygon points="1,0 1,16 13,8" fill="#444" />
        </svg>
        <svg width="14" height="14" viewBox="0 0 14 14" className="ml-[11px]">
          <polygon points="1,0 1,14 11,7" fill="#444" />
          <path d="M13 0V14" stroke="#444" strokeWidth="2" />
        </svg>
      </div>
      <div className="flex">
        {HISTORY.map((name, i) => (
          <div key={i} className="flex w-[24px] flex-col items-center pt-[8px]">
            {TL[name]}
            <div className="mt-[1px] h-[6px] w-[2px] bg-[#666666]" />
          </div>
        ))}
      </div>
      <div className="ml-auto mr-[9px] flex items-center pb-[2px] text-[18px] text-[#666666]">
        <FaCog />
      </div>
      {/* progress bar, ruler and marker lie over the history row */}
      <div className="absolute left-[144px] top-[2px] h-[4px] w-[1172px] bg-[#fbb0b0]" />
      <div className="absolute bottom-[1px] left-[154px] h-[2px] w-[1152px] bg-[#666666]" />
      <div className="absolute bottom-[1px] left-[147px] h-[2px] w-[3px] bg-[#666666]" />
      <svg className="absolute left-[1311px] top-[3px]" width="14" height="32" viewBox="0 0 14 32">
        <polygon points="1,0 13,0 8,8 8,32 6,32 6,8" fill="#666666" />
      </svg>
    </div>
  );
}

export default function App() {
  return (
    <div className="h-[1080px] w-full bg-white pl-[277px] pt-[150px] font-['Liberation_Sans',sans-serif]">
      <div className="w-[1367px]">
        {/* TITLE BAR */}
        <div className="flex h-[29px] items-center pt-[5px] font-['Noto_Sans',sans-serif] text-[11.4px] text-[#111111]">
          <svg width="15" height="15" viewBox="0 0 15 15" className="ml-[3px]">
            <rect x="2" y="11" width="12" height="3" fill="#a8cfe8" />
            <path d="M3 13C3 6 5 2 11 1V4C8 4 8 6 8 7H11V9H8V13Z" fill="#e97a1a" />
          </svg>
          <span className="ml-[5px]">Autodesk Fusion 360</span>
          <div className="ml-auto flex items-center">
            <div className="mr-[35px] h-px w-[10px] bg-[#111111]" />
            <svg width="11" height="11" viewBox="0 0 11 11" className="mr-[35px]">
              <path d="M0.5 2.5H8.5V10.5H0.5ZM2.5 2.5V0.5H10.5V8.5H8.5" fill="none" stroke="#111" />
            </svg>
            <svg width="11" height="11" viewBox="0 0 11 11" className="mr-[20px]">
              <path d="M0 0L11 11M11 0L0 11" stroke="#111" />
            </svg>
          </div>
        </div>

        {/* APP BAR */}
        <div className="flex h-[29px] items-center border-b-0 bg-[#d8d8d8] text-[#444444]">
          <div className="ml-[12px] grid h-[17px] w-[17px] grid-cols-3 gap-px">
            {Array.from({ length: 9 }).map((_, i) => (
              <div key={i} className="bg-[#444444]" />
            ))}
          </div>
          <svg width="13" height="16" viewBox="0 0 13 16" className="ml-[27px]">
            <path d="M0 0H8L13 5V16H0Z" fill="#555555" />
            <path d="M8.5 0V4.5H13" stroke="#d8d8d8" fill="none" />
          </svg>
          <div className="ml-[5px]">
            <Caret />
          </div>
          <div className="ml-[25px] text-[17px] text-[#555555]">
            <FaSave />
          </div>
          <div className="ml-[23px] text-[15px]">
            <FaReply />
          </div>
          <div className="ml-[6px]">
            <Caret />
          </div>
          <div className="ml-[17px] text-[15px] text-[#999999]">
            <FaShare />
          </div>
          <div className="ml-[6px]">
            <Caret color="#888888" />
          </div>
          <span className="ml-auto text-[11px] text-[#555555]">Jury Bonavolonta</span>
          <div className="ml-[6px]">
            <Caret />
          </div>
          <div className="ml-[25px] text-[16px] text-[#666666]">
            <FaQuestionCircle />
          </div>
          <div className="ml-[4px] mr-[13px]">
            <Caret />
          </div>
        </div>
        <div className="h-[2px] bg-[#999999]" />

        {/* TABS */}
        <div className="flex h-[21px] items-center bg-[#d8d8d8]">
          <div className="flex h-full w-[199px] items-center border-r-2 border-[#999999] bg-[#ececec]">
            <svg width="15" height="14" viewBox="0 0 15 14" className="ml-[11px]">
              <polygon points="0,3 6,0 15,2 11,5" fill="#999" />
              <polygon points="0,3 11,5 11,14 3,12" fill="#777" />
              <polygon points="11,5 15,2 15,10 11,14" fill="#555" />
            </svg>
            <span className="ml-[10px] pt-[2px] text-[12px] font-bold text-[#737373]">submarine v11*</span>
            <svg width="9" height="9" viewBox="0 0 9 9" className="ml-auto mr-[8px]">
              <path d="M1 1L8 8M8 1L1 8" stroke="#777" strokeWidth="2" />
            </svg>
          </div>
          <div className="ml-auto mr-[7px] text-[13px] text-[#888888]">
            <FaChevronUp />
          </div>
        </div>
        <div className="h-px bg-[#a6a6a6]" />

        {/* CANVAS */}
        <div className="relative flex h-[642px] flex-col overflow-hidden">
          <Viewport />
          <div className="relative flex h-full flex-col">
            <Toolbar />
            <div className="mt-[4px]">
              <PanelHeader title="BROWSER" height="h-[25px]" />
            </div>
            <Tree />
            <div className="mb-[5px] mt-auto">
              <PanelHeader title="COMMENTS" plus height="h-[23px]" />
            </div>
          </div>
          <NavBar />
        </div>

        {/* TIMELINE SCROLL STRIP */}
        <div className="flex h-[9px] justify-end border-t border-[#c4c4c4] bg-[#dcdcdc]">
          <div className="mt-px h-[7px] w-[126px] rounded-l-[4px] bg-[#8f8f8f]" />
        </div>
        <Timeline />
        <div className="h-[2px] bg-[#222222]" />
      </div>
    </div>
  );
}
